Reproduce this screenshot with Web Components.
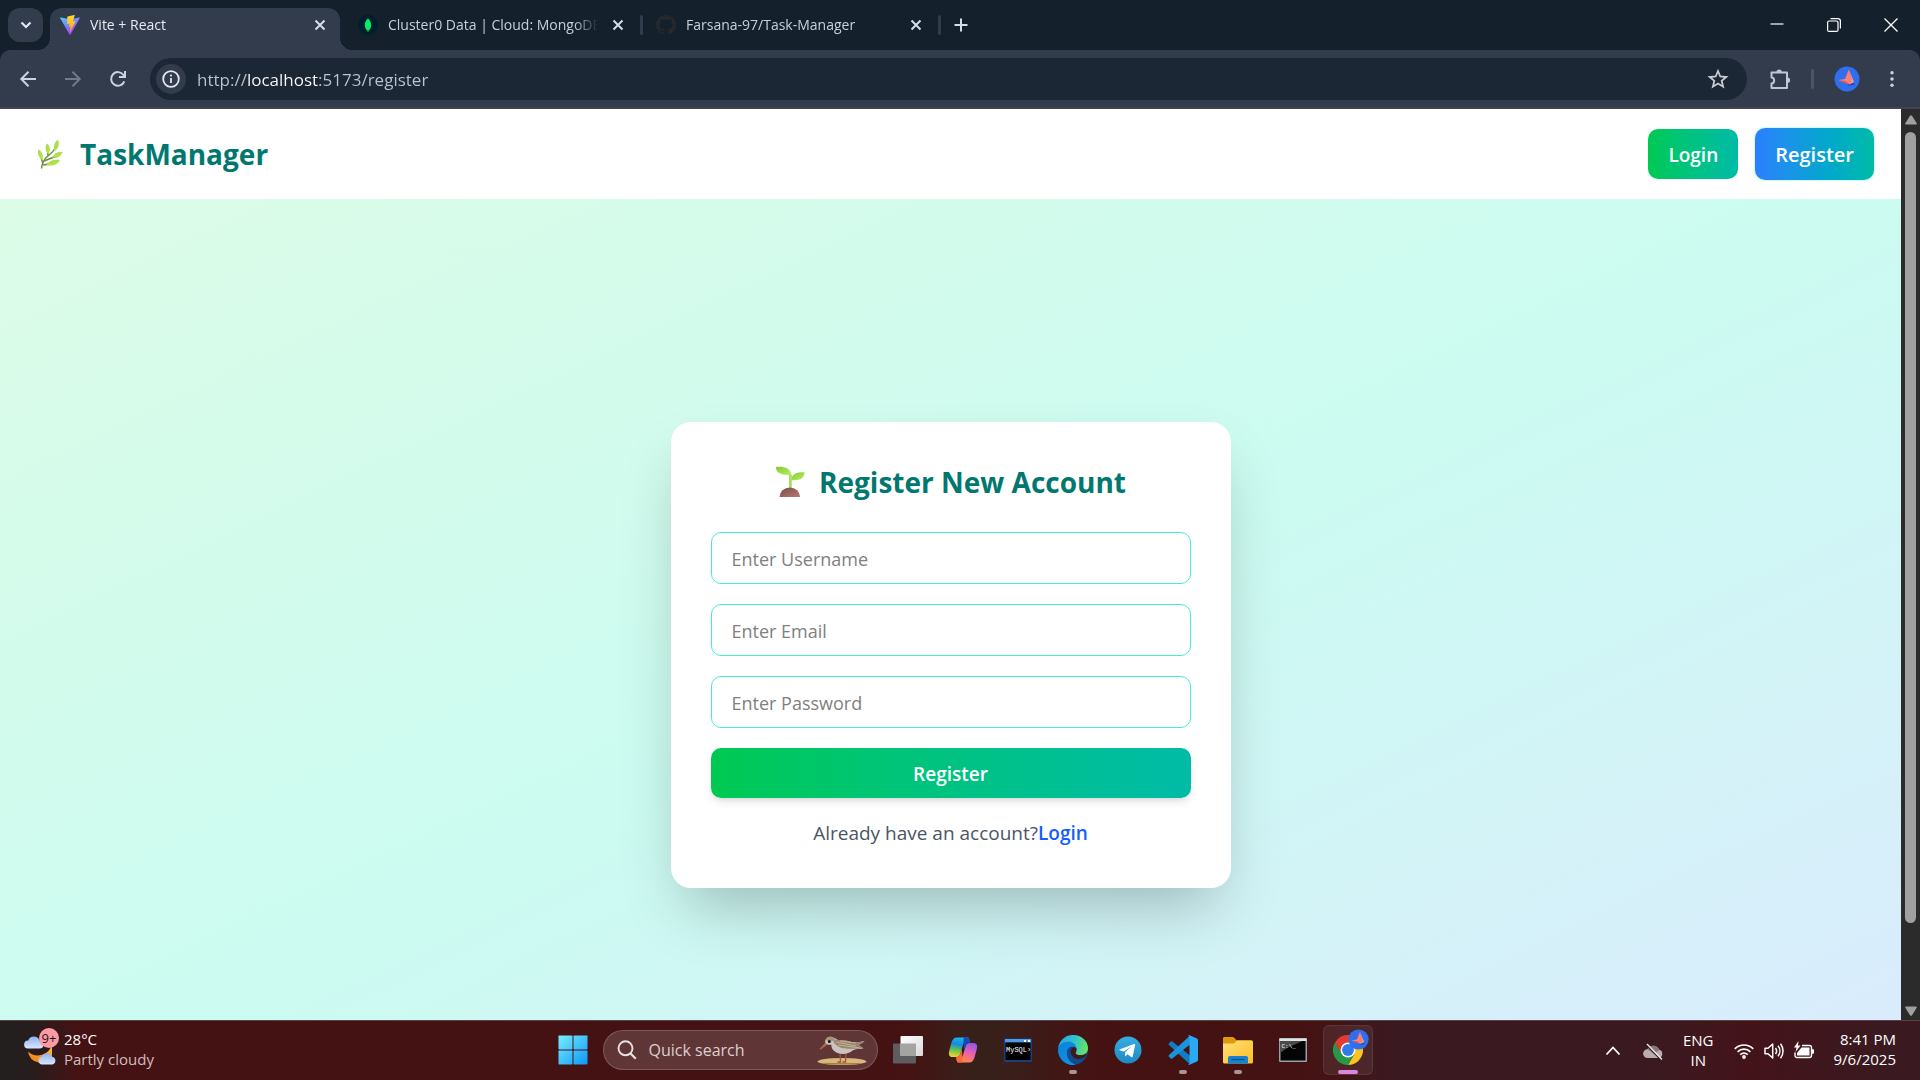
<!DOCTYPE html>
<html lang="en">
<head>
<meta charset="utf-8">
<title>Vite + React</title>
<style>
  html, body { margin: 0; height: 100%; }
  body { font-family: "Open Sans", "Noto Sans", sans-serif; overflow: hidden; background: #15202d; }
</style>
</head>
<body>
<desktop-screen></desktop-screen>

<script>
const BASE = `
  *, *::before, *::after { box-sizing: border-box; }
  :host { box-sizing: border-box; }
  button, input { font: inherit; color: inherit; border: 0; background: none; padding: 0; margin: 0; }
  button { cursor: pointer; }
  button:focus-visible, a:focus-visible { outline: 2px solid #8ab4f8; }
`;

function define(name, css, html) {
  customElements.define(name, class extends HTMLElement {
    constructor() {
      super();
      const root = this.attachShadow({ mode: 'open' });
      root.innerHTML = `<style>${BASE}${css}</style>` +
        (typeof html === 'function' ? html(this) : html);
    }
  });
}

/* ---------- icon set: [viewBox, markup] ---------- */
const AVATAR = `
  <circle cx="13" cy="13" r="12.5" fill="#2f6fed"/>
  <path d="M12.500 16.500 14.500 19.500 21 18.500 16 14.500z" fill="#1a45a8"/>
  <path d="M14.800 3.500 10.800 13.500 15.500 18.500 17.500 13z" fill="#ff7d72"/>
  <path d="M14.800 3.500 17.500 13 15.500 18.500 20 16z" fill="#ff9a90"/>
  <path d="M4.500 14 12.500 13 15.600 18.600z" fill="#ff8e84"/>
  <path d="M4.500 14 11 17 15.600 18.600 12 14.800z" fill="#e85a55"/>`;

const ICONS = {
  chevronDown: ['0 0 20 20', '<path d="M5.500 7.500 10 12l4.500-4.500" fill="none" stroke="#e3e8f2" stroke-width="2.200"/>'],
  vite: ['0 0 20 20', `
    <defs><linearGradient id="a" x1="0" y1="0" x2=".6" y2="1"><stop stop-color="#41d1ff"/><stop offset="1" stop-color="#bd34fe"/></linearGradient>
    <linearGradient id="b" x1="0" y1="0" x2="0" y2="1"><stop stop-color="#ffdd35"/><stop offset="1" stop-color="#ffa800"/></linearGradient></defs>
    <path d="M19.700 3.300 10.500 19.600a.6.6 0 0 1-1 0L.3 3.300a.5.500 0 0 1 .6-.8L10 4.200l9.200-1.700a.5.500 0 0 1 .5.800z" fill="url(#a)"/>
    <path d="M14.300.1 7.600 1.400a.3.300 0 0 0-.2.300L7 8.700a.3.300 0 0 0 .3.300l1.900-.4a.3.300 0 0 1 .3.300L9 11.600a.3.300 0 0 0 .3.400l1.100-.4a.3.300 0 0 1 .4.400l-.9 4.200c0 .3.300.4.500.2l5-10a.3.300 0 0 0-.3-.4l-1.900.4a.3.300 0 0 1-.3-.4L14.700.5a.3.300 0 0 0-.4-.4z" fill="url(#b)"/>`],
  mongo: ['0 0 20 20', `<circle cx="10" cy="10" r="10" fill="#001e2b"/>
    <path d="M10 3c.3 1 3.200 3 3.200 7.200 0 3-1.700 4.800-2.700 5.400L10.300 17h-.6l-.2-1.400c-1-.6-2.700-2.400-2.700-5.400C6.800 6 9.700 4 10 3z" fill="#00ed64"/>`],
  github: ['0 0 16 16', '<path fill="#25292e" d="M8 0C3.580 0 0 3.580 0 8c0 3.540 2.290 6.530 5.470 7.590.4.070.55-.17.55-.38 0-.19-.01-.82-.01-1.490-2.010.37-2.530-.49-2.690-.94-.09-.23-.48-.94-.82-1.130-.28-.15-.68-.52-.01-.53.63-.01 1.080.58 1.230.82.72 1.210 1.870.87 2.330.66.070-.52.28-.87.51-1.070-1.780-.2-3.640-.89-3.640-3.950 0-.87.31-1.590.82-2.150-.08-.2-.36-1.020.08-2.120 0 0 .67-.21 2.200.82.64-.18 1.320-.27 2-.27s1.360.09 2 .27c1.530-1.040 2.200-.82 2.200-.82.44 1.100.16 1.920.08 2.120.51.56.82 1.270.82 2.150 0 3.070-1.870 3.750-3.650 3.950.29.25.54.73.54 1.480 0 1.070-.01 1.930-.01 2.200 0 .21.15.46.55.38A8.010 8.010 0 0 0 16 8c0-4.420-3.580-8-8-8z"/>'],
  close: ['0 0 20 20', '<path d="m5.500 5.500 9 9m0-9-9 9" stroke="#d5dcea" stroke-width="2"/>'],
  plus: ['0 0 20 20', '<path d="M10 3.500v13M3.500 10h13" stroke="#d5dcea" stroke-width="2"/>'],
  winMin: ['0 0 20 20', '<path d="M3.500 9h13" stroke="#fff" stroke-width="1.200"/>'],
  winRestore: ['0 0 20 20', '<rect x="3.600" y="6" width="10.400" height="10.400" rx="1.500" fill="none" stroke="#fff" stroke-width="1.200"/><path d="M6.500 3.600h7.400a2.500 2.500 0 0 1 2.500 2.500v7.400" fill="none" stroke="#fff" stroke-width="1.200"/>'],
  winClose: ['0 0 20 20', '<path d="m3.500 3.500 13 13m0-13-13 13" stroke="#fff" stroke-width="1.300"/>'],
  back: ['0 0 20 20', '<path d="M18 10H3.500M10.500 2.800 3.300 10l7.200 7.200" fill="none" stroke="#cbd3e3" stroke-width="2"/>'],
  forward: ['0 0 20 20', '<path d="M2 10h14.500M9.500 2.800l7.200 7.200-7.200 7.200" fill="none" stroke="#717a8a" stroke-width="2"/>'],
  reload: ['0 0 20 20', '<path d="M16.300 12.300A6.800 6.800 0 1 1 15.500 6L17 8" fill="none" stroke="#cbd3e3" stroke-width="2"/><path d="M17 2v6h-6" fill="none" stroke="#cbd3e3" stroke-width="2"/>'],
  info: ['0 0 20 20', '<circle cx="10" cy="10" r="7.800" fill="none" stroke="#e3e8f2" stroke-width="1.800"/><path d="M10 9v5" stroke="#e3e8f2" stroke-width="1.800"/><circle cx="10" cy="6.500" r="1.100" fill="#e3e8f2"/>'],
  star: ['0 0 22 22', '<path d="m11 3 2.300 5.500 6 .5-4.600 3.900 1.400 5.800-5.100-3.100-5.100 3.100 1.400-5.800L2.700 9l6-.5z" fill="none" stroke="#c9cbd0" stroke-width="1.800"/>'],
  puzzle: ['0 0 22 22', '<path d="M2.500 4.500h15.500v15.500H2.500V15.500c3.500 0 3.500-6 0-6z" fill="none" stroke="#bdc7da" stroke-width="2" stroke-linejoin="round"/><path d="M7.500 4a2.600 2.600 0 0 1 5.200 0zM18.500 9.600a2.600 2.600 0 0 1 0 5.200z" fill="#bdc7da"/>'],
  dots: ['0 0 20 20', '<g fill="#cbd3e3"><circle cx="10" cy="3" r="1.900"/><circle cx="10" cy="10" r="1.900"/><circle cx="10" cy="17" r="1.900"/></g>'],
  avatar: ['0 0 26 26', AVATAR],
  herb: ['0 0 28 30', `
    <defs><linearGradient id="l" x1="0" y1="0" x2="1" y2="1"><stop stop-color="#9bd94f"/><stop offset="1" stop-color="#bfe84c"/></linearGradient></defs>
    <path d="M5.500 29.500C6 24 8 20 12.500 16.500S20 9 20.500 5M8.500 22c4-2 9-3.500 14-5.500M7 25C6 21 5 18 3.500 14M12 17c0-4-.5-6-1.500-9M7 26c5 0 8-1 12-3" fill="none" stroke="#6a8f3f" stroke-width="1.500"/>
    <g fill="url(#l)"><path d="M22 .5c1.800 5 .7 9-3.200 11.500C17 8.500 18 3.500 22 .5z"/><path d="M11 4.500c3.500 2.500 3.700 7 1.600 10.800C9.300 12.500 8.800 8.500 11 4.500z"/><path d="M2.200 10.500c4 2 5.300 5.600 4.600 10.500C3 19 1.200 15 2.200 10.500z"/><path d="M26.500 13c-1.500 4.800-5.300 6.300-10.500 5.600 1.700-4.300 5.500-6.200 10.500-5.600z"/><path d="M24 21.200c-2.300 4.600-7.600 6.400-13.500 4.800 2.400-4.400 7.800-6.200 13.500-4.800z"/></g>`],
  seedling: ['0 0 30 31', `
    <defs><linearGradient id="s" x1="0" y1="0" x2="1" y2="1"><stop stop-color="#86c83a"/><stop offset="1" stop-color="#b8f05a"/></linearGradient>
    <linearGradient id="d" x1="0" y1="0" x2="1" y2="1"><stop stop-color="#7a4b48"/><stop offset="1" stop-color="#b87a72"/></linearGradient></defs>
    <path d="M14 23V9h2.800v14z" fill="#a5df5e"/>
    <path d="M.8 1C8 0 15.500 1.500 16.500 9 8 9 1.500 8.500.8 1z" fill="url(#s)"/>
    <path d="M29.500 6.200c0 6-4.500 8.500-13.200 8 .2-6 5-8.500 13.200-8z" fill="url(#s)"/>
    <path d="M4.500 31a10.300 9.500 0 0 1 20.600 0z" fill="url(#d)"/>`],
  weather: ['0 0 36 36', `
    <defs><linearGradient id="c" x1="0" y1="0" x2="0" y2="1"><stop stop-color="#8db0f3"/><stop offset="1" stop-color="#dbe7fb"/></linearGradient>
    <linearGradient id="m" x1="0" y1="1" x2="1" y2="0"><stop stop-color="#ee7b16"/><stop offset="1" stop-color="#fcc43c"/></linearGradient></defs>
    <path d="M4 19.500a14.500 14.500 0 0 0 24-7.500v11A12.500 12.500 0 0 1 4 19.500z" fill="url(#m)"/>
    <path d="M5 17.500a4 4 0 0 1 .2-8 6 6 0 0 1 11.300 0 4 4 0 0 1 0 8z" fill="url(#c)" transform="translate(-1 -1)"/>
    <path d="M17.500 32.500a4 4 0 0 1 .3-7.800 5.600 5.600 0 0 1 10.400 0 4 4 0 0 1 .2 7.800z" fill="url(#c)"/>`],
  windows: ['0 0 30 30', `<defs><linearGradient id="w" gradientUnits="userSpaceOnUse" x1="0" y1="0" x2="30" y2="30"><stop stop-color="#7af0fc"/><stop offset="1" stop-color="#0a94fb"/></linearGradient></defs>
    <g fill="url(#w)"><rect x=".5" y=".5" width="14" height="14" rx=".7"/><rect x="15.500" y=".5" width="14" height="14" rx=".7"/><rect x=".5" y="15.500" width="14" height="14" rx=".7"/><rect x="15.500" y="15.500" width="14" height="14" rx=".7"/></g>`],
  search: ['0 0 20 20', '<circle cx="8.500" cy="8.300" r="7" fill="none" stroke="#e8e2e2" stroke-width="1.900"/><path d="m13.500 13.500 5.300 5.300" stroke="#e8e2e2" stroke-width="2.200"/>'],
  bird: ['0 0 52 32', `
    <ellipse cx="26" cy="27.500" rx="24.500" ry="3.500" fill="#d8b878"/><path d="M4 29a24 2.500 0 0 0 44 0z" fill="#a67f45"/>
    <path d="M24 19l.5 9h-3m8.500-9-.5 9h-3" fill="none" stroke="#9b5a3e" stroke-width="1.300"/>
    <path d="M9.500 8.500 3.500 15l1 .6 6.500-4.600z" fill="#b06a4a"/>
    <path d="M9 7.500C9.500 3.500 13 2 16 3c3 .6 4 2.500 6.500 3 5 .6 10 .5 14 2.500 4 0 8-.5 12-1.500-2 2-4 3.500-7 4 2 .8 4 1.600 6 3.500-4 .8-8 .2-11 2-3.500 3.500-10 4.500-15 2.500-4.500-2-6-4.500-6.200-8.200C12 11 9.500 10.500 9 7.500z" fill="#c9c4bf"/>
    <path d="M17.500 6.500c6-1 14-.5 19 2 4 0 8-.5 12-1.500-2 2-4 3.500-7 4 2 .8 4 1.600 6 3.500-10 .5-21 1-26-2.500-3-2-4-3.500-4-5.500z" fill="#98836f"/>
    <path d="m20 8 20 4m-18-1 22 3M24 7l16 2" stroke="#cbb59b" stroke-width=".9"/>
    <path d="M9.500 6.500C10.500 3 13.500 2 16.500 3.200c2 .8 2.500 2 3.500 3l-4 1z" fill="#a89274"/>
    <circle cx="13.300" cy="7.500" r="1.500" fill="#191515"/>`],
  taskview: ['0 0 30 30', `<defs><linearGradient id="t" x1="0" y1="0" x2="1" y2="1"><stop stop-color="#fff"/><stop offset="1" stop-color="#dadada"/></linearGradient></defs>
    <rect y="8.500" width="23" height="20" rx="1" fill="#5d5d5d"/><rect x="7.500" y="1" width="22.500" height="20" rx="1" fill="url(#t)"/><path d="M7.500 8.500H23V21H7.500z" fill="#a6a3a3"/>`],
  copilot: ['0 0 30 30', `<defs>
    <linearGradient id="p" x1=".5" y1="0" x2=".3" y2="1"><stop stop-color="#19b5ef"/><stop offset=".35" stop-color="#1688e8"/><stop offset=".6" stop-color="#4fc05c"/><stop offset="1" stop-color="#f9d02b"/></linearGradient>
    <linearGradient id="q" x1=".7" y1="0" x2=".3" y2="1"><stop stop-color="#9257ea"/><stop offset=".5" stop-color="#f062a8"/><stop offset="1" stop-color="#ff8a3c"/></linearGradient></defs>
    <path d="M19.500 2.500H9c-3.200 0-4.500 2-5.500 5L1.200 16c-1 4 .3 6 3.500 6h4c2 0 3-1.200 3.700-3.400l2.700-9C15.800 7.500 17 7 18.500 7h3.200C21.200 4 21 2.500 19.500 2.500z" fill="url(#p)"/>
    <path d="M10.500 27.500H21c3.200 0 4.500-2 5.500-5l2.300-8.500c1-4-.3-6-3.500-6h-4c-2 0-3 1.200-3.700 3.400l-2.700 9C14.200 22.500 13 23 11.500 23H8.300c.5 3 .7 4.500 2.200 4.500z" fill="url(#q)"/>
    <path d="M16 2.500h3.500c1.500 0 1.800 1.500 2.300 5.500-2 0-3.400 1-4.300 3.400L16 16c0-6-1-11 0-13.500z" fill="#1447b8"/>
    <path d="M14 27.500h-3.500c-1.500 0-1.800-1.500-2.300-5.500 2 .2 3.400-.8 4.200-3.400L14 14c0 6 1 11 0 13.500z" fill="#fb6a3a"/>`],
  mysql: ['0 0 30 30', `<rect x="1" y="3.500" width="28" height="23.500" rx="1" fill="#1b3f7d"/><rect x="2" y="4" width="26" height="3.500" fill="#4f9bea"/><path d="M21 5h2v2h-2zm4 0h2v2h-2z" fill="#fff"/><rect x="2.500" y="7.500" width="25" height="17.500" fill="#000"/>
    <text x="3" y="17" fill="#fff" font-family="Liberation Mono, monospace" font-size="7">MySQL›</text>`],
  edge: ['0 0 30 30', `<defs>
    <linearGradient id="e" x1="0" y1=".4" x2="1" y2=".6"><stop stop-color="#2aa5e0"/><stop offset=".5" stop-color="#2fc4cc"/><stop offset="1" stop-color="#6be85a"/></linearGradient>
    <linearGradient id="f" x1="0" y1="0" x2="1" y2="1"><stop stop-color="#0d82d8"/><stop offset="1" stop-color="#1590e6"/></linearGradient></defs>
    <circle cx="15" cy="15" r="15" fill="#0f4d93"/>
    <path d="M.3 12C2 4.500 8 0 15 0c8.500 0 15 6 15 13 0 5-3.600 7.600-7.500 7.600-3 0-5-1-5-2.200 0-.8 1-1.300 1-3.400 0-3-3-5-6.500-5C7.500 10 3 11 .3 12z" fill="url(#e)"/>
    <path d="M0 15C0 10 4.500 6.500 10.500 6.500c5 0 8 4 8 7.500-1-2-3-2.700-4.500-2.500-5 .7-6 6-4.500 10.500 1.300 4 4.500 6.500 8 7.700A15 15 0 0 1 0 15z" fill="url(#f)"/>
    <path d="M18.500 14c.5 2-1 3.500-1 4.400 0 1.200 2 2.200 5 2.200 2.500 0 4.500-.8 5.500-1.800l.5 2c-2.500 3-5 3.700-8.500 3.700-4.500 0-7.500-4.500-7.500-8 0-3.500 5-5 6-2.500z" fill="#471214" opacity=".9" transform="translate(0 -.5)"/>`],
  telegram: ['0 0 30 30', `<defs><linearGradient id="g" x1="0" y1="0" x2="0" y2="1"><stop stop-color="#37aee2"/><stop offset="1" stop-color="#1e88c4"/></linearGradient></defs>
    <circle cx="15" cy="15" r="13.500" fill="url(#g)"/><path d="M6.500 14.500 21 9c.8-.2 1.300.2 1.100 1.200l-2.400 11.200c-.2.900-.8 1-1.500.6l-3.700-2.700-1.800 1.700c-.3.300-.6.300-.6-.3l.1-3.600L19 11.200l-8.300 5.300-3.900-1.200c-.8-.3-.8-.6-.3-.8z" fill="#fff"/>`],
  vscode: ['0 0 30 30', `
    <path d="M1 8.200 2.800 6.500c.5-.4 1-.4 1.500 0L22 20.500V29.500L1 10c-.6-.6-.6-1.200 0-1.800z" fill="#0f7cc4"/>
    <path d="M1 21.800l1.800 1.700c.5.400 1 .4 1.500 0L22 9.500V.5L1 20c-.6.600-.6 1.200 0 1.800z" fill="#1a93dc"/>
    <path d="M21.500.3 29 3.600c.6.300 1 .9 1 1.600v19.600c0 .7-.4 1.300-1 1.600l-7.500 3.300c-.8.300-1.500 0-2-.6 1 .6 2 .1 2-1.300V2.200c0-1.400-1-1.900-2-1.300.5-.6 1.200-.9 2-.6z" fill="#2aaaf4"/>`],
  folder: ['0 0 30 30', `<defs><linearGradient id="h" x1="0" y1="0" x2="1" y2="1"><stop stop-color="#ffe07a"/><stop offset="1" stop-color="#fcbf1f"/></linearGradient></defs>
    <path d="M0 3.500C0 2.600.6 2 1.500 2h8c.8 0 1.300.3 2 1l2 2.200h15v6H0z" fill="#dc9a0c"/>
    <path d="M0 8.500h11L14 5.500h14.500c.9 0 1.500.6 1.500 1.500v20c0 .9-.6 1.500-1.500 1.500h-27C.6 28.500 0 27.900 0 27z" fill="url(#h)"/>
    <path d="M5 28.500V23c0-1.300.8-2 2-2h16c1.200 0 2 .7 2 2v5.500z" fill="#1583d0"/><path d="M8.500 24.500h13" stroke="#0b5394" stroke-width="1.300"/>`],
  cmd: ['0 0 30 30', `<rect x="1" y="3" width="28" height="24" rx="1" fill="#98a0a8"/><rect x="1.500" y="3.500" width="27" height="2.500" fill="#dfe4e9"/><rect x="2.500" y="6" width="25" height="19.500" fill="#050505"/><path d="M2.500 6h22c-6 3-15 5.500-22 12z" fill="#4a4a4a"/>
    <text x="3.500" y="12.500" fill="#fff" font-family="Liberation Mono, monospace" font-size="6">C:\\_</text>`],
  chrome: ['0 0 30 30', `
    <path d="M15 7.500h13A15 15 0 0 1 15 30l6.500-11.200z" fill="#fcc31e"/>
    <path d="M8.500 18.800 2 7.500A15 15 0 0 0 15 30l6.500-11.200z" fill="#279847"/>
    <path d="M2 7.500A15 15 0 0 1 28 7.500H15l-6.500 11.300z" fill="#e33b2e"/>
    <circle cx="15" cy="15" r="7.500" fill="#fff"/><circle cx="15" cy="15" r="5.900" fill="#2f7bea"/>`],
  up: ['0 0 20 20', '<path d="m3.500 13.500 6.500-7 6.500 7" fill="none" stroke="#fff" stroke-width="1.800"/>'],
  cloudOff: ['0 0 20 20', '<path d="M4.500 17a4.400 4.400 0 0 1 0-8.800A6.400 6.400 0 0 1 16.200 8.800a4.200 4.200 0 0 1-.4 8.200z" fill="#b9adb0"/><path d="M4.500 8.200A6.400 6.400 0 0 1 16.200 8.800L11.500 13z" fill="#85777a"/><path d="m3.500 4 14.500 15" stroke="#3b1a20" stroke-width="1.500"/><path d="m4 3 15 15.500" stroke="#f2eeee" stroke-width="1.300"/>'],
  wifi: ['0 0 20 20', '<g fill="none" stroke="#fff" stroke-width="1.700"><path d="M.8 7.800a13 13 0 0 1 18.400 0"/><path d="M3.600 10.800a9 9 0 0 1 12.800 0"/><path d="M6.300 13.600a5.200 5.200 0 0 1 7.400 0"/></g><circle cx="10" cy="16" r="1.900" fill="#fff"/>'],
  volume: ['0 0 20 20', '<g fill="none" stroke="#fff" stroke-width="1.500" stroke-linejoin="round"><path d="M1 7.200h3L8.700 3v14L4 12.800H1z"/><path d="M11.500 7a5 5 0 0 1 0 6M14 4.800a8.200 8.200 0 0 1 0 10.400M16.500 2.800a11.500 11.500 0 0 1 0 14.400"/></g>'],
  battery: ['0 0 20 20', '<path d="M8 4.500h7.500c1.200 0 2 .8 2 2v8c0 1.200-.8 2-2 2H3c-1.200 0-2-.8-2-2v-3" fill="none" stroke="#fff" stroke-width="1.400"/><path d="M7.500 6.500h8v8H3v-2.500z" fill="#fff"/><path d="M18 8.300h1c.6 0 1 .4 1 1v2.400c0 .6-.4 1-1 1h-1z" fill="#fff"/><path d="M4.500 0 0 6.500h2.500L1.500 11 6.500 4.500H4z" fill="#fff"/>'],
  arrowUp: ['0 0 12 10', '<path d="M5 .8c.5-.8 1.500-.8 2 0l4.700 7.500c.4.700 0 1.200-.7 1.200H1c-.7 0-1.100-.5-.7-1.200z" fill="#a0a0a0"/>'],
  arrowDown: ['0 0 12 10', '<path d="M5 9.200c.5.800 1.500.8 2 0l4.700-7.500C12.100 1 11.700.5 11 .5H1C.3.500-.1 1 .3 1.700z" fill="#a0a0a0"/>'],
};

/* <ui-icon name="..." size="width"> */
customElements.define('ui-icon', class extends HTMLElement {
  constructor() {
    super();
    this.attachShadow({ mode: 'open' });
  }
  connectedCallback() {
    const [box, art] = ICONS[this.getAttribute('name')];
    const [, , bw, bh] = box.split(' ').map(Number);
    const w = Number(this.getAttribute('size')) || bw;
    const h = w * bh / bw;
    this.shadowRoot.innerHTML =
      `<style>:host{display:block;flex:none}svg{display:block}</style>
       <svg width="${w}" height="${h}" viewBox="${box}" aria-hidden="true">${art}</svg>`;
  }
});

/* ---------- browser chrome ---------- */
define('browser-tab', `
  :host { display: flex; align-items: center; gap: 10px; width: 290px; height: 42px; padding: 0 10px 8px;
          position: relative; border-radius: 12px 12px 0 0; font-size: 14px; line-height: 20px; color: #c6cfdf; }
  :host([active]) { background: #323c4d; color: #e6eaf3; }
  :host([active])::before, :host([active])::after { content: ""; position: absolute; bottom: 0; width: 12px; height: 12px; }
  :host([active])::before { right: 100%; background: radial-gradient(circle at 0 0, transparent 12px, #323c4d 12px); }
  :host([active])::after { left: 100%; background: radial-gradient(circle at 100% 0, transparent 12px, #323c4d 12px); }
  .title { flex: 1; min-width: 0; overflow: hidden; white-space: nowrap;
           -webkit-mask-image: linear-gradient(to left, transparent, #000 24px); mask-image: linear-gradient(to left, transparent, #000 24px); }
`, el => `
  <ui-icon name="${el.getAttribute('icon')}" size="20"></ui-icon>
  <span class="title"><slot></slot></span>
  <button aria-label="Close tab"><ui-icon name="close" size="20"></ui-icon></button>`);

define('tab-strip', `
  :host { display: flex; align-items: flex-end; height: 50px; padding-left: 8px; background: #15202d; }
  .list { width: 35px; height: 34px; margin: 0 7px 8px 0; border-radius: 12px; background: #323c4d; display: grid; place-items: center; }
  i { width: 3px; height: 20px; margin: 0 3px 15px 2px; border-radius: 2px; background: #323c4d; }
  i.off { visibility: hidden; }
  .new { height: 20px; margin: 0 0 15px 7px; }
  .win { margin-left: auto; display: flex; height: 50px; padding-right: 1px; }
  .win button { width: 57px; display: grid; place-items: center; }
`, `
  <button class="list" aria-label="Search tabs"><ui-icon name="chevronDown" size="20"></ui-icon></button>
  <browser-tab active icon="vite">Vite + React</browser-tab><i class="off"></i>
  <browser-tab icon="mongo">Cluster0 Data | Cloud: MongoDB Atlas</browser-tab><i></i>
  <browser-tab icon="github">Farsana-97/Task-Manager</browser-tab><i></i>
  <button class="new" aria-label="New tab"><ui-icon name="plus" size="20"></ui-icon></button>
  <div class="win">
    <button aria-label="Minimize"><ui-icon name="winMin" size="20"></ui-icon></button>
    <button aria-label="Restore"><ui-icon name="winRestore" size="20"></ui-icon></button>
    <button aria-label="Close"><ui-icon name="winClose" size="20"></ui-icon></button>
  </div>`);

define('tool-bar', `
  :host { display: block; background: #15202d; }
  .bar { display: flex; align-items: center; height: 59px; padding: 0 19px 0 18px; background: #323c4d;
         border-bottom: 2px solid #44464f; border-radius: 10px 10px 0 0; }
  .nav { display: flex; gap: 25px; margin-right: 22px; }
  .omni { flex: 1; display: flex; align-items: center; gap: 11px; height: 42px; padding: 0 18px 0 6px; border-radius: 21px; background: #1c2736; }
  .info { width: 30px; height: 30px; border-radius: 15px; background: #323c4d; display: grid; place-items: center; }
  input { flex: 1; min-width: 0; height: 30px; padding-top: 2px; outline: none; font-size: 17px; line-height: 24px;
          color: transparent; caret-color: #fff; -webkit-background-clip: text; background-clip: text;
          background-image: linear-gradient(90deg, #bcc4d2 50px, #fff 50px 121px, #bcc4d2 121px); }
  .end { display: flex; align-items: center; margin-left: 22px; }
  i { width: 3px; height: 20px; margin: 0 20px; border-radius: 2px; background: #4b566a; }
  .menu { margin-left: 23px; }
`, `
  <div class="bar">
    <div class="nav">
      <button aria-label="Back"><ui-icon name="back" size="20"></ui-icon></button>
      <button aria-label="Forward"><ui-icon name="forward" size="20"></ui-icon></button>
      <button aria-label="Reload"><ui-icon name="reload" size="20"></ui-icon></button>
    </div>
    <div class="omni">
      <button class="info" aria-label="Site information"><ui-icon name="info" size="20"></ui-icon></button>
      <input type="text" aria-label="Address" value="http://localhost:5173/register" spellcheck="false">
      <button aria-label="Bookmark"><ui-icon name="star" size="22"></ui-icon></button>
    </div>
    <div class="end">
      <button aria-label="Extensions"><ui-icon name="puzzle" size="22"></ui-icon></button>
      <i></i>
      <button aria-label="Profile"><ui-icon name="avatar" size="26"></ui-icon></button>
      <button class="menu" aria-label="Menu"><ui-icon name="dots" size="18"></ui-icon></button>
    </div>
  </div>`);

define('page-scroller', `
  :host { display: flex; flex-direction: column; align-items: center; width: 19px; flex: none; padding: 6px 0 4px; background: #2b2b2b; }
  .track { flex: 1; width: 11px; margin: 7px 0 5px; }
  .thumb { height: 91%; border-radius: 6px; background: #a0a0a0; }
`, `<ui-icon name="arrowUp" size="12"></ui-icon><div class="track"><div class="thumb"></div></div><ui-icon name="arrowDown" size="12"></ui-icon>`);

/* ---------- the web page ---------- */
define('site-header', `
  :host { display: flex; align-items: center; justify-content: space-between; flex: none; height: 90px; padding: 0 27px 0 36px; background: #fff; }
  .brand { display: flex; align-items: center; gap: 16px; margin: 0; font-size: 28px; line-height: 40px; font-weight: 700; color: #00786f; }
  nav { display: flex; align-items: center; gap: 17px; }
  button { font-size: 19px; line-height: 30px; font-weight: 600; color: #fff; padding: 11px 20px 9px; border-radius: 10px;
           background: linear-gradient(to right in oklab, #00c951, #00bba7); }
  .primary { font-size: 20px; padding: 12px 20px 10px; background: linear-gradient(to right in oklab, #2b7fff, #00bba7); box-shadow: 0 0 1px 1px #cbfbf1; }
`, `
  <h1 class="brand"><ui-icon name="herb" size="28"></ui-icon>TaskManager</h1>
  <nav><button>Login</button><button class="primary">Register</button></nav>`);

define('text-field', `
  :host { display: block; }
  input { display: block; width: 100%; height: 52px; padding: 2px 20px 0; border: 1px solid #46ecd5; border-radius: 10px;
          background: #fff; color: #000; font-size: 18px; line-height: 30px; outline: none; }
  input::placeholder { color: #808080; opacity: 1; }
  input:focus { box-shadow: 0 0 0 2px #46ecd5; }
`, el => `<input type="${el.getAttribute('type')}" aria-label="${el.getAttribute('label')}" placeholder="${el.getAttribute('label')}">`);

define('register-card', `
  :host { display: block; width: 560px; padding: 40px; border-radius: 20px; background: #fff; box-shadow: 0 31px 62px -15px rgb(0 0 0 / .25); }
  h2 { display: flex; justify-content: center; align-items: center; gap: 14px; margin: 0 0 30px; font-size: 28px; line-height: 40px; font-weight: 700; color: #00786f; }
  form { display: flex; flex-direction: column; gap: 20px; }
  button { height: 50px; padding-top: 2px; border-radius: 10px; color: #fff; font-size: 19px; font-weight: 600;
           background: linear-gradient(to right in oklab, #00c951, #00bba7);
           box-shadow: 0 5px 8px -1px rgb(0 0 0 / .1), 0 3px 5px -3px rgb(0 0 0 / .1); }
  p { margin: 20px 0 0; text-align: center; font-size: 19px; line-height: 30px; color: #4a5565; }
  a { color: #155dfc; font-weight: 600; text-decoration: none; }
`, `
  <h2><ui-icon name="seedling" size="30"></ui-icon>Register New Account</h2>
  <form>
    <text-field type="text" label="Enter Username"></text-field>
    <text-field type="email" label="Enter Email"></text-field>
    <text-field type="password" label="Enter Password"></text-field>
    <button type="button">Register</button>
  </form>
  <p>Already have an account?<a href="#login">Login</a></p>`);

define('web-page', `
  :host { display: flex; flex: 1; min-height: 0; }
  .view { flex: 1; min-width: 0; display: flex; flex-direction: column; overflow: hidden; }
  main { flex: none; height: 100%; display: flex; align-items: center; justify-content: center;
         background: linear-gradient(to bottom right in oklab, #dcfce7, #cbfbf1, #dbeafe); }
`, `
  <div class="view">
    <site-header></site-header>
    <main><register-card></register-card></main>
  </div>
  <page-scroller></page-scroller>`);

/* ---------- taskbar ---------- */
define('task-app', `
  :host { display: block; }
  button { position: relative; display: grid; place-items: center; width: 50px; height: 50px; border-radius: 6px; }
  :host([running]) button::after { content: ""; position: absolute; bottom: 1px; left: 21px; width: 8px; height: 4px; border-radius: 2px; background: #a99496; }
  :host([current]) button { background: rgb(255 255 255 / .07); box-shadow: inset 0 0 0 1px rgb(255 255 255 / .08); }
  :host([current]) button::after { left: 15px; width: 20px; background: #e085dc; }
  .badge { position: absolute; top: 4px; right: 4px; }
`, el => `<button aria-label="${el.getAttribute('icon')}"><ui-icon name="${el.getAttribute('icon')}" size="30"></ui-icon>
  ${el.hasAttribute('current') ? '<ui-icon class="badge" name="avatar" size="21"></ui-icon>' : ''}</button>`);

define('weather-widget', `
  :host { display: flex; align-items: center; gap: 4px; padding: 0 0 3px 24px; font-size: 15px; line-height: 20px; color: #fff; }
  .art { position: relative; padding-top: 2px; }
  b { position: absolute; top: -2px; right: 1px; width: 20px; height: 20px; border-radius: 10px; background: #ff99a4; color: #1a1a1a;
      font-size: 13px; font-weight: 400; line-height: 20px; text-align: center; }
  .sub { color: #d0bebe; }
`, `
  <div class="art"><ui-icon name="weather" size="36"></ui-icon><b>9+</b></div>
  <div><div>28°C</div><div class="sub">Partly cloudy</div></div>`);

define('quick-search', `
  :host { display: flex; align-items: center; gap: 12px; width: 275px; height: 40px; padding: 0 10px 0 14px; border-radius: 20px;
          background: rgb(255 255 255 / .15); box-shadow: inset 0 0 0 1px rgb(255 255 255 / .18); }
  input { flex: 1; min-width: 0; height: 30px; font-size: 16px; outline: none; color: #fff; }
  input::placeholder { color: #dccfcf; opacity: 1; }
`, `
  <ui-icon name="search" size="20"></ui-icon>
  <input type="text" aria-label="Quick search" placeholder="Quick search">
  <ui-icon name="bird" size="52"></ui-icon>`);

define('system-tray', `
  :host { display: flex; align-items: center; justify-content: flex-end; gap: 20px; padding-right: 24px; font-size: 15px; line-height: 20px; color: #fff; }
  .lang { text-align: center; padding-bottom: 2px; }
  .status { display: flex; gap: 10px; }
  .clock { text-align: right; padding-bottom: 3px; }
`, `
  <button aria-label="Hidden icons"><ui-icon name="up" size="20"></ui-icon></button>
  <ui-icon name="cloudOff" size="20"></ui-icon>
  <div class="lang"><div>ENG</div><div>IN</div></div>
  <div class="status"><ui-icon name="wifi" size="20"></ui-icon><ui-icon name="volume" size="20"></ui-icon><ui-icon name="battery" size="20"></ui-icon></div>
  <div class="clock"><div>8:41 PM</div><div>9/6/2025</div></div>`);

define('task-bar', `
  :host { display: grid; grid-template-columns: 1fr auto 1fr; align-items: center; flex: none; height: 60px; border-top: 1px solid #5b4244;
          background: linear-gradient(90deg, #231f1f 0, #261d1d 1.5%, #451213 4%, #451213 47%, #38201a 50.500%, #38201a 52%, #451213 57%, #451213 68%, #3a1a20 73%, #3a1a20 86%, #44131a 91%, #3a1a20 98%); }
  .apps { display: flex; align-items: center; gap: 5px; padding-bottom: 1px; }
`, `
  <weather-widget></weather-widget>
  <div class="apps">
    <task-app icon="windows"></task-app>
    <quick-search></quick-search>
    <task-app icon="taskview"></task-app>
    <task-app icon="copilot"></task-app>
    <task-app icon="mysql"></task-app>
    <task-app icon="edge" running></task-app>
    <task-app icon="telegram"></task-app>
    <task-app icon="vscode" running></task-app>
    <task-app icon="folder" running></task-app>
    <task-app icon="cmd"></task-app>
    <task-app icon="chrome" running current></task-app>
  </div>
  <system-tray></system-tray>`);

define('desktop-screen', `
  :host { display: flex; flex-direction: column; height: 100vh; }
`, `
  <tab-strip></tab-strip>
  <tool-bar></tool-bar>
  <web-page></web-page>
  <task-bar></task-bar>`);
</script>
</body>
</html>
